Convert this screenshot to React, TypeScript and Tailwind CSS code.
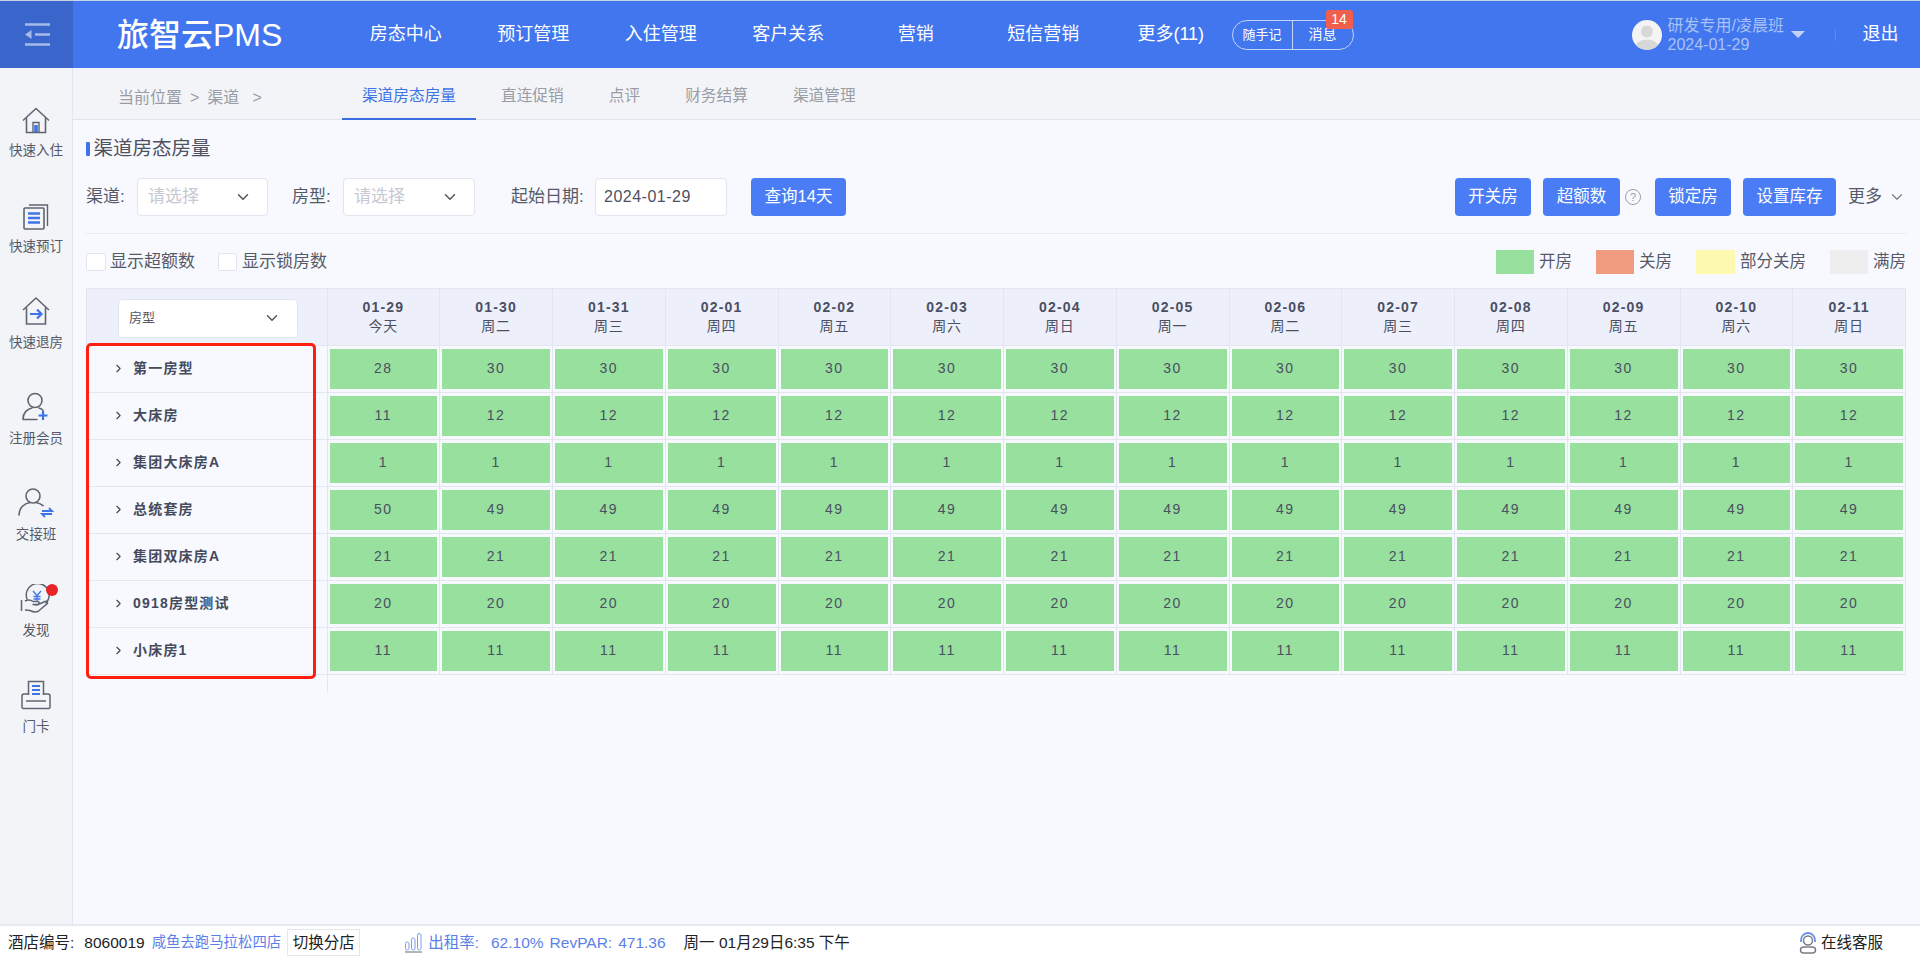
import { ChevronDown, ChevronRight } from "lucide-react";

const dates = [
  ["01-29", "今天"],
  ["01-30", "周二"],
  ["01-31", "周三"],
  ["02-01", "周四"],
  ["02-02", "周五"],
  ["02-03", "周六"],
  ["02-04", "周日"],
  ["02-05", "周一"],
  ["02-06", "周二"],
  ["02-07", "周三"],
  ["02-08", "周四"],
  ["02-09", "周五"],
  ["02-10", "周六"],
  ["02-11", "周日"],
];

const rooms = [
  { name: "第一房型", first: 28, rest: 30 },
  { name: "大床房", first: 11, rest: 12 },
  { name: "集团大床房A", first: 1, rest: 1 },
  { name: "总统套房", first: 50, rest: 49 },
  { name: "集团双床房A", first: 21, rest: 21 },
  { name: "0918房型测试", first: 20, rest: 20 },
  { name: "小床房1", first: 11, rest: 11 },
];

const navItems = ["房态中心", "预订管理", "入住管理", "客户关系", "营销", "短信营销", "更多(11)"];
const grey = "#5f6472";
const blue = "#3f74e8";

function HomeIcon() {
  return (
    <svg width="30" height="27" viewBox="0 0 30 27" fill="none">
      <path d="M2 13.5 15 1.5l13 12" stroke={grey} strokeWidth="1.6" strokeLinejoin="round" />
      <path d="M5.5 11v14.5h19V11" stroke={grey} strokeWidth="1.6" />
      <path d="M12 25V15.5h6V25" stroke={grey} strokeWidth="1.4" />
      <rect x="13.2" y="18" width="3.6" height="7" fill={blue} />
    </svg>
  );
}

function BookIcon() {
  return (
    <svg width="26" height="26" viewBox="0 0 26 26" fill="none">
      <path d="M6 1h18.5v21" stroke={grey} strokeWidth="1.4" />
      <rect x="1" y="4" width="20" height="21" stroke={grey} strokeWidth="1.6" rx="1" />
      <path d="M5 9.5h12M5 14h12M5 18.5h12" stroke={blue} strokeWidth="2.4" />
    </svg>
  );
}

function CheckoutIcon() {
  return (
    <svg width="30" height="30" viewBox="0 0 30 30" fill="none">
      <path d="M2 14 15 2l13 12" stroke={grey} strokeWidth="1.6" strokeLinejoin="round" />
      <path d="M5.5 11.5V28h19V11.5" stroke={grey} strokeWidth="1.6" />
      <path d="M9 18h11M16 13.5l4.5 4.5-4.5 4.5" stroke={blue} strokeWidth="2.2" />
    </svg>
  );
}

function MemberIcon() {
  return (
    <svg width="28" height="30" viewBox="0 0 28 30" fill="none">
      <circle cx="13" cy="8.5" r="7" stroke={grey} strokeWidth="1.6" />
      <path d="M1 27c0-6 4-10 9-11M17 16c1.5.4 3 1.2 4 2.3M1 27.5h14" stroke={grey} strokeWidth="1.6" strokeLinecap="round" />
      <path d="M21 19v9M16.5 23.5h9" stroke={blue} strokeWidth="2.2" />
    </svg>
  );
}

function ShiftIcon() {
  return (
    <svg width="36" height="30" viewBox="0 0 36 30" fill="none">
      <circle cx="15" cy="8" r="7" stroke={grey} strokeWidth="1.6" />
      <path d="M1 27c0-7 5-11.5 11-12.5M18 14.5c2.5.4 5 1.5 7 3.2" stroke={grey} strokeWidth="1.6" strokeLinecap="round" />
      <path d="M24 23h10l-3-3M34 26H24l3 3" stroke={blue} strokeWidth="1.8" />
    </svg>
  );
}

function FindIcon() {
  return (
    <svg width="32" height="30" viewBox="0 0 32 30" fill="none">
      <path d="M7 15a11.5 11.5 0 1 1 19 4" stroke={grey} strokeWidth="1.5" strokeLinecap="round" />
      <path d="M1.5 16v11M5 17c3-1.5 6-1 8 .5h5c1.5 0 1.5 3-1 3h-4l4 .5 8-3.5c2.5-1 3.5 1.5 1.5 2.8L18 27.5c-3 1-6 0-8-1l-5-.5" stroke={grey} strokeWidth="1.5" strokeLinejoin="round" />
      <path d="M13 7l4 4.5L21 7M13.5 12.5h7M13.5 15h7M17 11.5v6" stroke={blue} strokeWidth="1.3" />
    </svg>
  );
}

function CardIcon() {
  return (
    <svg width="30" height="30" viewBox="0 0 30 30" fill="none">
      <path d="M7.5 15V1.5h15V15" stroke={grey} strokeWidth="1.5" />
      <path d="M7 14H3a2 2 0 0 0-2 2v11a1.5 1.5 0 0 0 1.5 1.5h25A1.5 1.5 0 0 0 29 27V16a2 2 0 0 0-2-2h-4" stroke={grey} strokeWidth="1.5" />
      <path d="M5 21h20" stroke={grey} strokeWidth="1.5" />
      <path d="M11 6h8M11 10h8M11 14h8" stroke={blue} strokeWidth="1.8" />
    </svg>
  );
}

const sideItems = [
  { label: "快速入住", icon: <HomeIcon /> },
  { label: "快速预订", icon: <BookIcon /> },
  { label: "快速退房", icon: <CheckoutIcon /> },
  { label: "注册会员", icon: <MemberIcon /> },
  { label: "交接班", icon: <ShiftIcon /> },
  { label: "发现", icon: <FindIcon />, dot: true },
  { label: "门卡", icon: <CardIcon /> },
];

function Select({ width }: { width: string }) {
  return (
    <div className={`${width} h-[38px] bg-white border border-[#e2e5ef] rounded-[4px] flex items-center justify-between pl-[10px] pr-[15px]`}>
      <span className="text-[#c6c9d2] text-[17px]">请选择</span>
      <ChevronDown size={18} color="#555" strokeWidth={2} />
    </div>
  );
}

function BlueButton({ children, width }: { children: React.ReactNode; width: string }) {
  return (
    <button className={`${width} h-[38px] bg-[#4a7df5] text-white text-[16.5px] rounded-[4px]`}>{children}</button>
  );
}

function Legend({ color, label, swatch }: { color: string; label: string; swatch: string }) {
  return (
    <div className="flex items-center">
      <span className={`${swatch} h-[24px] ${color}`} />
      <span className="ml-[5px] text-[16.5px] text-[#555968]">{label}</span>
    </div>
  );
}

export default function App() {
  return (
    <div className="h-screen flex flex-col overflow-hidden bg-[#f7f9ff] [font-family:'Liberation_Sans','Noto_Sans_CJK_SC',sans-serif]">
      <header className="h-[68px] shrink-0 border-t border-[#c9d3e6] bg-[#4176ee] flex items-center text-white">
        <div className="w-[73px] h-full bg-[#3a66cc] flex items-center justify-center">
          <svg width="26" height="23" viewBox="0 0 26 23" fill="none">
            <path d="M1 1.5h25M11 11.5h15M1 21.5h25" stroke="#a6bbea" strokeWidth="2.4" />
            <path d="M1 11.5 7.5 7v9z" fill="#a6bbea" />
          </svg>
        </div>
        <div className="ml-[44px] w-[225px] text-[32px] font-medium leading-none">旅智云PMS</div>
        <nav className="flex">
          {navItems.map((item) => (
            <div key={item} className="w-[127.5px] text-center text-[18px]">
              {item}
            </div>
          ))}
        </nav>
        <div className="relative ml-[-3px] h-[30px] w-[122px] flex border border-[#c3d3f8] rounded-full text-[14px]">
          <span className="w-[60px] border-r border-[#c3d3f8] flex items-center justify-center text-[13px]">随手记</span>
          <span className="flex-1 flex items-center justify-center">消息</span>
          <span className="absolute right-0 top-[-11px] w-[27px] h-[19px] bg-[#ef5f4b] rounded-[3px] text-[14px] leading-[19px] text-center">14</span>
        </div>
        <div className="ml-[278px] w-[30px] h-[30px] rounded-full bg-[#f4f4f4] overflow-hidden flex justify-center">
          <svg width="30" height="30" viewBox="0 0 30 30">
            <circle cx="15" cy="11.5" r="6" fill="#d8d8d8" />
            <ellipse cx="15" cy="26" rx="11" ry="6.5" fill="#d8d8d8" />
          </svg>
        </div>
        <div className="ml-[6px] w-[120px] text-[16px] leading-[19px] text-[#a9c1f6]">
          <div>研发专用/凌晨班</div>
          <div>2024-01-29</div>
        </div>
        <span className="ml-[3px] w-0 h-0 border-x-[7px] border-x-transparent border-t-[7px] border-t-[#c3d3f8]" />
        <span className="ml-[30px] w-px h-[12px] bg-[#5f8bf0]" />
        <span className="ml-[27px] text-[18px]">退出</span>
      </header>

      <div className="flex-1 flex min-h-0">
        <aside className="w-[73px] shrink-0 bg-[#f3f4f8] border-r border-[#e3e6f1] pt-[33px]">
          {sideItems.map((s) => (
            <div key={s.label} className="relative h-[96px] flex flex-col items-center">
              <div className="h-[33px] flex items-end justify-center">{s.icon}</div>
              <div className="mt-[7px] text-[13.5px] text-[#555968] whitespace-nowrap">{s.label}</div>
              {s.dot && <span className="absolute left-[46px] top-[3px] w-[12px] h-[12px] rounded-full bg-[#e9232a]" />}
            </div>
          ))}
        </aside>

        <main className="flex-1 min-w-0 flex flex-col">
          <div className="h-[51.5px] shrink-0 bg-[#f3f4f8] border-b border-[#e1e3ea] flex text-[15.7px]">
            <div className="w-[269px] pl-[45px] pt-[18px] flex text-[16px] text-[#999ca5]">
              <span>当前位置</span>
              <span className="ml-[8px]">&gt;</span>
              <span className="ml-[8px]">渠道</span>
              <span className="ml-[13px]">&gt;</span>
            </div>
            <div className="w-[134px] h-[51.5px] border-b-[2px] border-[#3a6ee0] text-[#3f74e8] text-center pt-[16px]">渠道房态房量</div>
            <div className="ml-[25px] flex gap-[45px] pt-[16px] text-[#999ca5]">
              <span>直连促销</span>
              <span>点评</span>
              <span>财务结算</span>
              <span>渠道管理</span>
            </div>
          </div>

          <div className="flex-1 min-h-0 pl-[13px] pr-[14px]">
            <div className="mt-[19px] h-[20px] flex items-center text-[19.5px] text-[#4d5160]">
              <span className="w-[3.5px] h-[14px] bg-[#3f74e8] rounded-[1px] mr-[4px]" />
              渠道房态房量
            </div>

            <div className="mt-[19px] pb-[17px] border-b border-[#e9ebf3] flex items-center text-[17px] text-[#555968]">
              <span className="w-[51px]">渠道:</span>
              <Select width="w-[131px]" />
              <span className="ml-[24px] w-[51px]">房型:</span>
              <Select width="w-[132px]" />
              <span className="ml-[36px] w-[84px] whitespace-nowrap">起始日期:</span>
              <div className="w-[132px] h-[38px] bg-white border border-[#e2e5ef] rounded-[4px] flex items-center pl-[8px] text-[16px] text-[#4d5160] tracking-[0.5px]">2024-01-29</div>
              <BlueButton width="ml-[24px] w-[95px]">查询14天</BlueButton>
              <div className="ml-auto flex items-center">
                <BlueButton width="w-[76px]">开关房</BlueButton>
                <BlueButton width="ml-[12px] w-[77px]">超额数</BlueButton>
                <span className="ml-[5px] w-[16px] h-[16px] rounded-full border border-[#9a9da6] text-[#9a9da6] text-[11px] leading-[14px] text-center">?</span>
                <BlueButton width="ml-[14px] w-[76px]">锁定房</BlueButton>
                <BlueButton width="ml-[12px] w-[93px]">设置库存</BlueButton>
                <span className="ml-[12px] text-[#555968]">更多</span>
                <ChevronDown size={18} color="#777" strokeWidth={1.5} className="ml-[6px]" />
              </div>
            </div>

            <div className="h-[54px] pt-[2px] flex items-center text-[17px] text-[#555968]">
              <span className="w-[20px] h-[18px] bg-white border border-[#e2e5ef] rounded-[2px]" />
              <span className="ml-[4px]">显示超额数</span>
              <span className="ml-[23px] w-[19px] h-[18px] bg-white border border-[#e2e5ef] rounded-[2px]" />
              <span className="ml-[5px]">显示锁房数</span>
              <div className="ml-auto flex gap-[24px]">
                <Legend color="bg-[#98e09d]" label="开房" swatch="w-[38px]" />
                <Legend color="bg-[#f09b80]" label="关房" swatch="w-[38px]" />
                <Legend color="bg-[#fdf9ae]" label="部分关房" swatch="w-[39px]" />
                <Legend color="bg-[#eeeeee]" label="满房" swatch="w-[38px]" />
              </div>
            </div>

            <div className="relative">
              <div className="grid grid-cols-[240.5px_repeat(14,1fr)] border-t border-r border-[#e3e6f1]">
                <div className="h-[57px] bg-[#edf0fa] border-l border-b border-[#e3e6f1] pl-[31px] pt-[10px]">
                  <div className="w-[180px] h-[39px] bg-white border border-[#e2e5ef] rounded-[4px] flex items-center justify-between pl-[10px] pr-[16px] text-[13px] text-[#555968]">
                    房型
                    <ChevronDown size={18} color="#555" strokeWidth={2} />
                  </div>
                </div>
                {dates.map(([d, w]) => (
                  <div key={d} className="h-[57px] bg-[#edf0fa] border-l border-b border-[#e3e6f1] flex flex-col items-center justify-center text-[#4a4f63]">
                    <div className="text-[14px] leading-[19px] font-bold tracking-[1.2px]">{d}</div>
                    <div className="text-[14px] leading-[19px] tracking-[1px]">{w}</div>
                  </div>
                ))}
                {rooms.map((room) => (
                  <div key={room.name} className="contents">
                    <div className="h-[47px] border-b border-[#e3e6f1] flex items-center pl-[26px] text-[14px] font-bold tracking-[1.2px] text-[#454a5c]">
                      <ChevronRight size={13} color="#444" strokeWidth={2} className="mr-[8px]" />
                      {room.name}
                    </div>
                    {dates.map(([d], i) => (
                      <div key={d} className="h-[47px] border-l border-b border-[#e3e6f1] px-[2px] py-[3px]">
                        <div className="h-full bg-[#98e09d] flex items-center justify-center text-[14px] tracking-[1.5px] text-[#4a4f63]">
                          {i === 0 ? room.first : room.rest}
                        </div>
                      </div>
                    ))}
                  </div>
                ))}
              </div>
              <div className="ml-[240.5px] w-px h-[18px] bg-[#e3e6f1]" />
              <div className="absolute left-0 top-[55px] w-[230px] h-[336px] border-[3px] border-[#ff1f10] rounded-[5px]" />
            </div>
          </div>
        </main>
      </div>

      <footer className="h-[35px] shrink-0 bg-white border-t-[2px] border-[#e8e9f1] flex items-center text-[15.5px] text-[#222] whitespace-nowrap">
        <span className="ml-[8px]">酒店编号:</span>
        <span className="ml-[10px]">8060019</span>
        <span className="ml-[7px] text-[#5b7fe8] text-[14.4px]">咸鱼去跑马拉松四店</span>
        <span className="ml-[6px] w-[73px] h-[27px] border border-[#e6e7ee] flex items-center justify-center">切换分店</span>
        <svg className="ml-[44px]" width="19" height="22" viewBox="0 0 19 22" fill="none">
          <path d="M1 20h17" stroke="#9a9da6" strokeWidth="1.5" />
          <rect x="1.5" y="10" width="3.5" height="8" rx="1.7" stroke="#7c9bf0" />
          <rect x="7.5" y="6" width="3.5" height="12" rx="1.7" stroke="#7c9bf0" />
          <rect x="13.5" y="1.5" width="3.5" height="16.5" rx="1.7" stroke="#7c9bf0" />
        </svg>
        <span className="ml-[5px] text-[#5b7fe8]">出租率:</span>
        <span className="ml-[12px] text-[#5b7fe8]">62.10%</span>
        <span className="ml-[6px] text-[#5b7fe8]">RevPAR:</span>
        <span className="ml-[6px] text-[#5b7fe8]">471.36</span>
        <span className="ml-[18px]">周一 01月29日6:35 下午</span>
        <div className="ml-auto mr-[37px] flex items-center">
          <svg width="18" height="22" viewBox="0 0 18 22" fill="none">
            <path d="M2 10V8a7 7 0 0 1 14 0v2" stroke="#6d91ee" strokeWidth="1.8" />
            <circle cx="9" cy="8.5" r="4.5" stroke="#7a7d86" strokeWidth="1.5" />
            <rect x="1.5" y="15" width="15" height="6" rx="3" stroke="#7a7d86" strokeWidth="1.5" />
          </svg>
          <span className="ml-[4px] text-[15.5px]">在线客服</span>
        </div>
      </footer>
    </div>
  );
}
